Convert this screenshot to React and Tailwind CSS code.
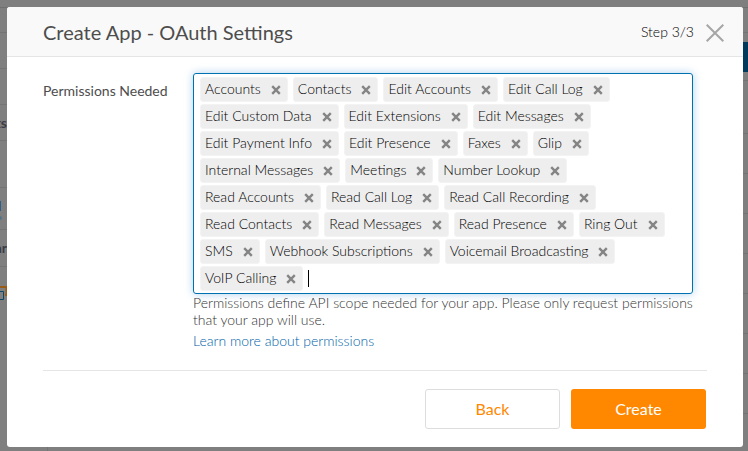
import React from "react";

const permissions = [
  "Accounts", "Contacts", "Edit Accounts", "Edit Call Log",
  "Edit Custom Data", "Edit Extensions", "Edit Messages",
  "Edit Payment Info", "Edit Presence", "Faxes", "Glip",
  "Internal Messages", "Meetings", "Number Lookup",
  "Read Accounts", "Read Call Log", "Read Call Recording",
  "Read Contacts", "Read Messages", "Read Presence", "Ring Out",
  "SMS", "Webhook Subscriptions", "Voicemail Broadcasting",
  "VoIP Calling",
];

function Tag({ name }) {
  return (
    <li className="flex h-[25px] items-center rounded-[3px] border border-[#f3f3f3] bg-[#eeeeee] pr-[6px] pl-1">
      <span className="pb-[2px] leading-5">{name}</span>
      <button type="button" aria-label={`Remove ${name}`} className="ml-[10px] pt-px">
        <svg viewBox="0 0 10 10" className="h-[10px] w-[10px]" fill="none" stroke="#858585" strokeWidth="2.4">
          <path d="M1.2 1.2L8.8 8.8M8.8 1.2L1.2 8.8" />
        </svg>
      </button>
    </li>
  );
}

function Backdrop() {
  return (
    <div aria-hidden="true" className="absolute inset-0 flex justify-between overflow-hidden bg-[#7f7f7f] text-sm font-bold text-[#3c3c44]">
      <div className="flex w-12 flex-col">
        <div className="h-2 border-b border-[#707070]" />
        <div className="h-[25px] border-b border-[#747474]" />
        <div className="h-9 border-b border-[#747474]" />
        <div className="h-9 border-b border-[#747474]" />
        <div className="flex h-9 w-[7px] items-center justify-end border-b border-[#747474]">ts</div>
        <div className="h-[47px] border-b border-[#747474]" />
        <div className="flex h-[42px] flex-col items-start gap-[5px] border-b border-[#747474] pt-[13px]">
          <div className="h-[10px] w-px bg-[#2d5f8e]" />
          <div className="h-1 w-[2px] rounded-r bg-[#55748a]" />
        </div>
        <div className="flex h-[37px] w-[7px] items-center justify-end border-b border-[#747474]">ar</div>
        <svg width="8" height="40" fill="none" className="shrink-0">
          <path d="M0 20H6.500V28H5" stroke="#9a5b16" strokeWidth="2" />
          <path d="M0 24.500H3.500V32.500H0" stroke="#0e4762" strokeWidth="1" />
        </svg>
        <div className="grow border-r border-[#747474]" />
      </div>
      <div className="flex w-[5px] flex-col">
        <div className="h-2 border-b border-[#707070]" />
        <div className="h-[25px] border-b border-[#747474]" />
        <div className="flex h-12 flex-col justify-center border-b border-[#747474]">
          <div className="h-[30px] bg-[#00395a]" />
        </div>
        <div className="h-[53px] border-b border-[#747474]" />
        <div className="h-10 border-b border-[#747474]" />
        <div className="h-10 border-b border-[#747474]" />
        <div className="h-10 border-b border-[#747474]" />
        <div className="h-10 border-b border-[#747474]" />
        <div className="h-10 border-b border-[#747474]" />
        <div className="h-10 border-b border-[#747474]" />
        <div className="h-10 border-b border-[#747474]" />
      </div>
    </div>
  );
}

export default function App() {
  return (
    <div className="relative min-h-screen overflow-hidden pt-[7px] pr-[5px] pb-1 pl-[7px] font-['Lato',sans-serif]">
      <Backdrop />
      <section role="dialog" aria-modal="true" aria-labelledby="title" className="relative overflow-hidden rounded-[3px] bg-white text-[#4d4d4d]">
        <header className="flex h-[50px] items-center border-b border-[#e5e5e5] bg-[#f9f9f9] pr-[19px] pl-9">
          <h1 id="title" className="grow text-xl">Create App - OAuth Settings</h1>
          <span className="text-sm font-light text-black">Step 3/3</span>
          <button type="button" aria-label="Close" className="ml-3 pt-[2px]">
            <svg viewBox="0 0 18 18" className="h-[18px] w-[18px]" fill="none" stroke="#a6a6a6" strokeWidth="2">
              <path d="M.7.7L17.300 17.300M17.300.7L.7 17.300" />
            </svg>
          </button>
        </header>
        <form className="px-9 pb-[18px]">
          <div className="flex pr-[14px]">
            <label htmlFor="permissions" className="w-[150px] shrink-0 pt-[24px] text-sm">Permissions Needed</label>
            <div className="min-w-0 grow pt-4">
              <ul className="flex flex-wrap gap-x-[5px] gap-y-[2px] rounded-[3px] border border-[#0071b0] px-[6px] pt-[3px] pb-[2px] text-sm font-light text-black shadow-[0_0_8px_rgba(60,140,210,0.4)]">
                {permissions.map((name) => <Tag key={name} name={name} />)}
                <li className="flex items-center">
                  <input id="permissions" type="text" className="h-[17px] w-10 border-l border-black bg-transparent outline-none" />
                </li>
              </ul>
              <p className="text-sm leading-[17px] font-light text-[#333333]">
                Permissions define API scope needed for your app. Please only request permissions that your app will use.
              </p>
              <a href="#permissions" className="mt-1 block text-sm leading-[17px] font-light text-[#005fa8]">Learn more about permissions</a>
            </div>
          </div>
          <div className="mt-[21px] flex justify-end gap-[11px] border-t border-[#e5e5e5] pt-[18px] pr-px text-base">
            <button type="button" className="h-10 w-[135px] rounded-[3px] border border-[#dddddd] bg-white text-[#ff8800]">Back</button>
            <button type="submit" className="h-10 w-[135px] rounded-[3px] bg-[#ff8800] text-white">Create</button>
          </div>
        </form>
      </section>
    </div>
  );
}
